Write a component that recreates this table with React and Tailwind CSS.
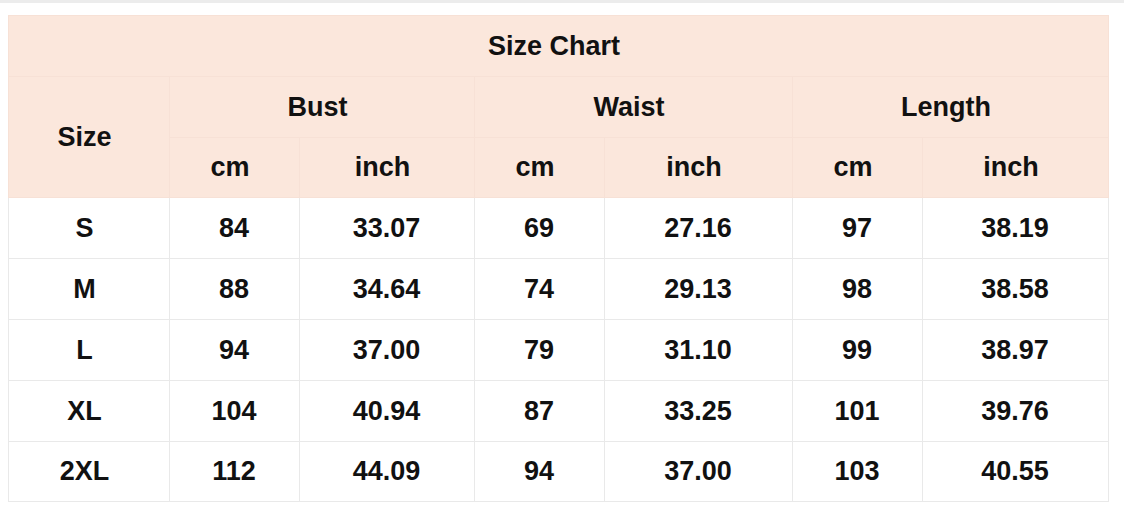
import React from "react";

const rows = [
  ["S", "84", "33.07", "69", "27.16", "97", "38.19"],
  ["M", "88", "34.64", "74", "29.13", "98", "38.58"],
  ["L", "94", "37.00", "79", "31.10", "99", "38.97"],
  ["XL", "104", "40.94", "87", "33.25", "101", "39.76"],
  ["2XL", "112", "44.09", "94", "37.00", "103", "40.55"],
];

const widths = [161, 130, 175, 130, 188, 130, 186];

export default function App() {
  const hc = "border border-[#f7e1d6] bg-[#fbe7dc] text-center align-middle pl-0 pr-[9px] py-0";
  const dc = "border border-[#e9e9e9] text-center align-middle pl-0 pr-[1px] py-0";
  const dc0 = "border border-[#e9e9e9] text-center align-middle pl-0 pr-[9px] py-0";
  return (
    <div
      className="w-[1124px] h-[530px] bg-white overflow-hidden text-[#111111] font-bold text-[27px] leading-none"
      style={{ fontFamily: '"Liberation Sans", Arial, sans-serif' }}
    >
      <div className="h-[3px] bg-[#ececec]" />
      <div className="pt-[12px] pl-[8px]">
        <table className="table-fixed border-collapse w-[1100px]">
          <colgroup>
            {widths.map((w, i) => (
              <col key={i} style={{ width: w }} />
            ))}
          </colgroup>
          <tbody>
            <tr className="h-[61px]">
              <td colSpan={7} className={hc}>Size Chart</td>
            </tr>
            <tr className="h-[61px]">
              <td rowSpan={2} className={hc}>Size</td>
              <td colSpan={2} className={hc}>Bust</td>
              <td colSpan={2} className={hc}>Waist</td>
              <td colSpan={2} className={hc}>Length</td>
            </tr>
            <tr className="h-[60px]">
              <td className={hc}>cm</td>
              <td className={hc}>inch</td>
              <td className={hc}>cm</td>
              <td className={hc}>inch</td>
              <td className={hc}>cm</td>
              <td className={hc}>inch</td>
            </tr>
            {rows.map((r, i) => (
              <tr key={i} className={i === 4 ? "h-[60px]" : "h-[61px]"}>
                {r.map((c, j) => (
                  <td key={j} className={j === 0 ? dc0 : dc}>{c}</td>
                ))}
              </tr>
            ))}
          </tbody>
        </table>
      </div>
    </div>
  );
}
